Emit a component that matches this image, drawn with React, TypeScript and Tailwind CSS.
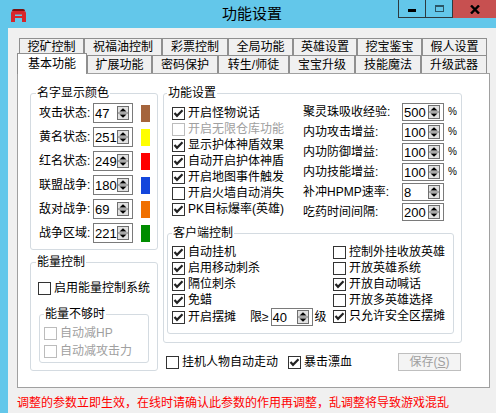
import React from 'react';

type Tab = { label: string; w: string };

const row1: Tab[] = [
  { label: '挖矿控制', w: 'w-[65px]' },
  { label: '祝福油控制', w: 'w-[78px]' },
  { label: '彩票控制', w: 'w-[66px]' },
  { label: '全局功能', w: 'w-[65px]' },
  { label: '英雄设置', w: 'w-[64px]' },
  { label: '挖宝鉴宝', w: 'w-[65px]' },
  { label: '假人设置', w: 'w-[65px]' },
];

const row2: Tab[] = [
  { label: '扩展功能', w: 'w-[65px]' },
  { label: '密码保护', w: 'w-[66px]' },
  { label: '转生/师徒', w: 'w-[71px]' },
  { label: '宝宝升级', w: 'w-[66px]' },
  { label: '技能魔法', w: 'w-[66px]' },
  { label: '升级武器', w: 'w-[66px]' },
];

// 名字颜色
const nameColors = [
  { label: '攻击状态:', value: '47', color: 'bg-[#a5643c]' },
  { label: '黄名状态:', value: '251', color: 'bg-[#ffff00]' },
  { label: '红名状态:', value: '249', color: 'bg-[#ff0000]' },
  { label: '联盟战争:', value: '180', color: 'bg-[#1446dc]' },
  { label: '敌对战争:', value: '69', color: 'bg-[#f07000]' },
  { label: '战争区域:', value: '221', color: 'bg-[#008c00]' },
];

const funcChecks = [
  { label: '开启怪物说话', checked: true },
  { label: '开启无限仓库功能', disabled: true },
  { label: '显示护体神盾效果', checked: true },
  { label: '自动开启护体神盾', checked: true },
  { label: '开启地图事件触发', checked: true },
  { label: '开启火墙自动消失' },
  { label: 'PK目标爆率(英雄)', checked: true },
];

const rates = [
  { label: '聚灵珠吸收经验:', value: '500', pct: true },
  { label: '内功攻击增益:', value: '100', pct: true },
  { label: '内功防御增益:', value: '100', pct: true },
  { label: '内功技能增益:', value: '100', pct: true },
  { label: '补冲HPMP速率:', value: '8' },
  { label: '吃药时间间隔:', value: '200' },
];

const clientLeft = [
  { label: '自动挂机', checked: true },
  { label: '启用移动刺杀', checked: true },
  { label: '隔位刺杀', checked: true },
  { label: '免蜡', checked: true },
];

const clientRight = [
  { label: '控制外挂收放英雄' },
  { label: '开放英雄系统' },
  { label: '开放自动喊话', checked: true },
  { label: '开放多英雄选择' },
  { label: '只允许安全区摆摊', checked: true },
];

function Box({ checked, disabled }: { checked?: boolean; disabled?: boolean }) {
  return (
    <svg width="13" height="13" viewBox="0 0 13 13" className="shrink-0">
      <rect x="0.5" y="0.5" width="12" height="12" fill="#fff" stroke={disabled ? '#bcbcbc' : '#333'} />
      {checked && <path d="M2.5 6 L5 8.8 L10.5 3.2" fill="none" stroke="#222" strokeWidth="2.2" />}
    </svg>
  );
}

function CheckItem({ label, checked, disabled, className = 'h-[16px]' }: { label: string; checked?: boolean; disabled?: boolean; className?: string }) {
  return (
    <div className={`flex items-center gap-[3px] ${className}`}>
      <Box checked={checked} disabled={disabled} />
      <span className={`whitespace-nowrap text-[12px] leading-none ${disabled ? 'text-[#a0a0a0]' : 'text-black'}`}>{label}</span>
    </div>
  );
}

function Arrows() {
  return (
    <svg width="12" height="14" viewBox="0 0 12 14" className="shrink-0">
      <rect x="0.5" y="0.5" width="11" height="13" fill="#e1e1e1" stroke="#6f6f6f" />
      <line x1="1" y1="7" x2="11" y2="7" stroke="#6f6f6f" />
      <path d="M6 2.2 L9.5 5.6 H2.5 Z" fill="#000" />
      <path d="M6 11.8 L9.5 8.4 H2.5 Z" fill="#000" />
    </svg>
  );
}

function SpinBox({ value, className }: { value: string; className: string }) {
  return (
    <div className={`flex items-center justify-between border border-[#7a7a7a] bg-white pl-[1px] pr-[3px] ${className}`}>
      <span className="text-[13px] leading-none">{value}</span>
      <Arrows />
    </div>
  );
}

function Logo() {
  return (
    <svg width="17" height="14" viewBox="0 0 17 14">
      <path d="M2 3 Q2 1 4 1 H13 Q15 1 15 3 Z" fill="#7a1010" />
      <path d="M1 14 V5 Q1 3 3 3 H14 Q16 3 16 5 V14 H12 V10 H5 V14 Z M5 6.5 V8 H12 V6.5 Z" fill="#d7262b" fillRule="evenodd" />
    </svg>
  );
}

export default function App() {
  return (
    <div className="flex h-[413px] w-[496px] flex-col overflow-hidden bg-[#63c7ea] font-['Liberation_Sans','Noto_Sans_CJK_SC',sans-serif] text-black">
      {/* 标题栏 */}
      <div className="flex h-[28px] shrink-0">
        <div className="ml-[10px] mt-[8px]">
          <Logo />
        </div>
        <div className="ml-[195px] mt-[5px] text-[15px] leading-[18px]">功能设置</div>
        <div className="ml-auto flex h-[18px]">
          <div className="flex w-[27px] items-center justify-center border-b border-l border-[#2d3a3f]">
            <div className="mt-[3px] h-[3px] w-[8px] bg-black" />
          </div>
          <div className="flex w-[27px] items-center justify-center border-b border-l border-[#2d3a3f]">
            <div className="h-[7px] w-[9px] border border-t-2 border-[#2a5566]" />
          </div>
          <div className="flex w-[44px] items-center justify-center border-l border-[#2d3a3f] bg-[#c75050]">
            <svg width="10" height="9" viewBox="0 0 10 9">
              <path d="M1 0.5 L9 8.5 M9 0.5 L1 8.5" stroke="#000" strokeWidth="2.4" />
            </svg>
          </div>
        </div>
      </div>

      {/* 窗体 */}
      <div className="ml-[8px] flex-1 bg-[#f0f0f0] pl-[9px] pt-[10px]">
        <div className="ml-[2px] flex h-[17px]">
          {row1.map((t) => (
            <div key={t.label} className={`${t.w} flex items-center justify-center border-x border-t border-[#8f8f8f] text-[12px] leading-none`}>
              {t.label}
            </div>
          ))}
        </div>
        <div className="flex h-[18px]">
          <div className="relative top-[1px] z-10 flex h-[21px] w-[70px] items-center justify-center self-end border-x border-t border-[#8f8f8f] bg-white text-[12px] leading-none">
            基本功能
          </div>
          {row2.map((t) => (
            <div key={t.label} className={`${t.w} flex items-center justify-center border-x border-t border-[#8f8f8f] text-[12px] leading-none`}>
              {t.label}
            </div>
          ))}
        </div>

        <div className="flex h-[315px] w-[473px] gap-[5px] border border-[#a0a0a0] bg-white pl-[12px] pt-[11px]">
          {/* 左列 */}
          <div className="flex w-[128px] flex-col">
            <fieldset className="h-[165px] rounded-[3px] border border-[#d4dbe1]">
              <legend className="ml-[5px] px-[1px] text-[12px] leading-[16px]">名字显示颜色</legend>
              <div className="flex flex-col gap-[4px] pl-[8px] pt-[2px]">
                {nameColors.map((n) => (
                  <div key={n.label} className="flex items-center">
                    <span className="w-[54px] whitespace-nowrap text-[12px] leading-none">{n.label}</span>
                    <SpinBox value={n.value} className="h-[20px] w-[40px]" />
                    <div className={`ml-[8px] h-[17px] w-[9px] ${n.color}`} />
                  </div>
                ))}
              </div>
            </fieldset>

            <fieldset className="mt-[4px] h-[117px] rounded-[3px] border border-[#d4dbe1]">
              <legend className="ml-[5px] px-[1px] text-[12px] leading-[16px]">能量控制</legend>
              <div className="pl-[7px] pt-[10px]">
                <CheckItem label="启用能量控制系统" />
                <fieldset className="ml-[1px] mt-[10px] h-[57px] w-[110px] rounded-[3px] border border-[#d4dbe1]">
                  <legend className="ml-[4px] px-[1px] text-[12px] leading-[16px]">能量不够时</legend>
                  <div className="pl-[4px] pt-[2px]">
                    <CheckItem label="自动减HP" disabled className="h-[18px]" />
                    <CheckItem label="自动减攻击力" disabled className="h-[18px]" />
                  </div>
                </fieldset>
              </div>
            </fieldset>
          </div>

          {/* 右列 */}
          <div className="flex w-[299px] flex-col">
            <fieldset className="h-[258px] rounded-[3px] border border-[#d4dbe1]">
              <legend className="ml-[3px] px-[1px] text-[12px] leading-[16px]">功能设置</legend>
              <div className="flex">
                <div className="w-[139px] pl-[8px] pt-[4px]">
                  {funcChecks.map((c) => (
                    <CheckItem key={c.label} label={c.label} checked={c.checked} disabled={c.disabled} />
                  ))}
                </div>
                <div className="pt-[1px]">
                  {rates.map((r) => (
                    <div key={r.label} className="flex h-[20px] items-center">
                      <span className="w-[99px] whitespace-nowrap text-[12px] leading-none">{r.label}</span>
                      <SpinBox value={r.value} className="h-[18px] w-[42px]" />
                      {r.pct && <span className="ml-[4px] text-[10px] leading-none">%</span>}
                    </div>
                  ))}
                </div>
              </div>

              <fieldset className="ml-[3px] mt-[3px] h-[109px] w-[287px] rounded-[3px] border border-[#d4dbe1]">
                <legend className="ml-[4px] px-[1px] text-[12px] leading-[16px]">客户端控制</legend>
                <div className="flex pt-[3px]">
                  <div className="w-[165px] pl-[4px]">
                    {clientLeft.map((c) => (
                      <CheckItem key={c.label} label={c.label} checked={c.checked} />
                    ))}
                    <div className="flex h-[18px] items-center">
                      <CheckItem label="开启摆摊" checked />
                      <span className="ml-[14px] text-[12px] leading-none">限≥</span>
                      <SpinBox value="40" className="ml-[2px] h-[18px] w-[42px]" />
                      <span className="ml-[2px] text-[12px] leading-none">级</span>
                    </div>
                  </div>
                  <div>
                    {clientRight.map((c) => (
                      <CheckItem key={c.label} label={c.label} checked={c.checked} />
                    ))}
                  </div>
                </div>
              </fieldset>
            </fieldset>

            <div className="ml-[3px] mt-[10px] flex h-[18px] items-center">
              <CheckItem label="挂机人物自动走动" />
              <CheckItem label="暴击漂血" checked className="ml-[10px] h-[16px]" />
              <div className="ml-auto mr-[1px] flex h-[18px] w-[63px] items-center justify-center border border-[#bfbfbf] bg-[#f4f4f4] text-[12px] leading-none text-[#a0a0a0]">
                保存(<span className="underline">S</span>)
              </div>
            </div>
          </div>
        </div>

        <div className="pt-[7px] text-[12px] leading-[16px] whitespace-nowrap text-[#ff0000]">
          调整的参数立即生效，在线时请确认此参数的作用再调整，乱调整将导致游戏混乱
        </div>
      </div>
    </div>
  );
}
